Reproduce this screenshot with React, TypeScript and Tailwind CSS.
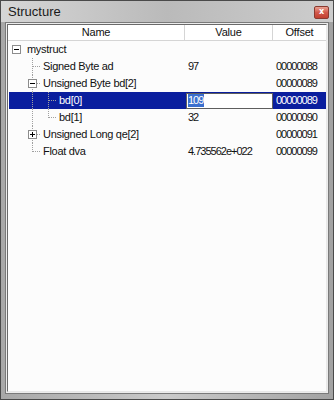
import React from "react";

type Line = "none" | "pipe" | "tee" | "ell";

function IndentCell({ kind, box }: { kind: Line; box?: "minus" | "plus" }) {
  return (
    <div className="w-[16px] h-[17px] shrink-0">
      <svg width="16" height="17" viewBox="0 0 16 17" shapeRendering="crispEdges">
        {kind === "pipe" && (
          <line x1="7.5" y1="0" x2="7.5" y2="17" stroke="#a0a0a0" strokeDasharray="1 1" />
        )}
        {kind === "tee" && (
          <>
            <line x1="7.5" y1="0" x2="7.5" y2="17" stroke="#a0a0a0" strokeDasharray="1 1" />
            <line x1="8" y1="8.5" x2="16" y2="8.5" stroke="#a0a0a0" strokeDasharray="1 1" />
          </>
        )}
        {kind === "ell" && (
          <>
            <line x1="7.5" y1="0" x2="7.5" y2="9" stroke="#a0a0a0" strokeDasharray="1 1" />
            <line x1="8" y1="8.5" x2="16" y2="8.5" stroke="#a0a0a0" strokeDasharray="1 1" />
          </>
        )}
        {box && (
          <>
            <rect x="3.5" y="4.5" width="8" height="8" fill="#ffffff" stroke="#8c8c8c" />
            <line x1="5" y1="8.5" x2="10" y2="8.5" stroke="#000000" />
            {box === "plus" && <line x1="7.5" y1="6" x2="7.5" y2="11" stroke="#000000" />}
          </>
        )}
      </svg>
    </div>
  );
}

type Row = {
  cells: { kind: Line; box?: "minus" | "plus" }[];
  name: string;
  value: string;
  offset: string;
  selected?: boolean;
  edit?: boolean;
};

const rows: Row[] = [
  { cells: [{ kind: "none", box: "minus" }], name: "mystruct", value: "", offset: "" },
  { cells: [{ kind: "none" }, { kind: "tee" }], name: "Signed Byte ad", value: "97", offset: "00000088" },
  { cells: [{ kind: "none" }, { kind: "tee", box: "minus" }], name: "Unsigned Byte bd[2]", value: "", offset: "00000089" },
  { cells: [{ kind: "none" }, { kind: "pipe" }, { kind: "tee" }], name: "bd[0]", value: "109", offset: "00000089", selected: true, edit: true },
  { cells: [{ kind: "none" }, { kind: "pipe" }, { kind: "ell" }], name: "bd[1]", value: "32", offset: "00000090" },
  { cells: [{ kind: "none" }, { kind: "tee", box: "plus" }], name: "Unsigned Long qe[2]", value: "", offset: "00000091" },
  { cells: [{ kind: "none" }, { kind: "ell" }], name: "Float dva", value: "4.735562e+022", offset: "00000099" },
];

export default function App() {
  return (
    <div
      className="w-[334px] h-[400px] flex flex-col border border-[#4a4a4a] bg-gradient-to-r from-[#a8a8a8] via-[#cacaca] to-[#a2a2a2] text-[11px] text-[#111111] select-none"
      style={{ fontFamily: '"Liberation Sans", Arial, sans-serif' }}
    >
      {/* Title bar */}
      <div className="h-[21px] shrink-0 flex items-center justify-between pl-[7px] pr-[4px] bg-gradient-to-r from-[#d6d6d6] via-[#bababa] to-[#cdcdcd]">
        <span className="text-[13px] text-[#1a1a1a] mt-[1px]">Structure</span>
        <div className="w-[15px] h-[13px] mt-[1px] rounded-[2px] border border-[#8a3a30] bg-gradient-to-b from-[#e9a192] via-[#d2584a] to-[#c2402f] flex items-center justify-center">
          <span className="text-[8px] leading-none font-bold text-white" style={{ fontFamily: '"DejaVu Sans", sans-serif' }}>x</span>
        </div>
      </div>
      {/* Body frame */}
      <div className="flex-1 flex px-[4px] pb-[5px]">
        <div className="flex-1 flex border border-[#7a7a7a]">
          <div className="flex-1 flex border border-[#ececec]">
            <div className="flex-1 flex border-t border-l border-[#6a6a6a] border-r border-b border-r-[#e8e8e8] border-b-[#e8e8e8]">
              <div className="flex-1 flex flex-col bg-[#fcfcfc]">
                {/* Header */}
                <div className="h-[16px] shrink-0 flex border-b border-[#d5d5d5] bg-white tracking-[-0.2px]">
                  <div className="w-[177px] flex items-center justify-center border-r border-[#d5d5d5]">Name</div>
                  <div className="w-[88px] flex items-center justify-center border-r border-[#d5d5d5]">Value</div>
                  <div className="flex-1 flex items-center justify-center">Offset</div>
                </div>
                {/* Rows */}
                <div className="flex flex-col">
                  {rows.map((r, i) => (
                    <div
                      key={i}
                      className={
                        "h-[17px] flex ml-[1px] " +
                        (r.selected ? "bg-[#0a1e9e] text-white" : "")
                      }
                    >
                      <div className="w-[176px] flex items-center shrink-0">
                        <div className="flex">
                          {r.cells.map((c, j) => (
                            <IndentCell key={j} kind={c.kind} box={c.box} />
                          ))}
                        </div>
                        <span className="ml-[2px] whitespace-nowrap tracking-[-0.3px]">{r.name}</span>
                      </div>
                      <div className="w-[88px] shrink-0 flex items-center tracking-[-1px]">
                        {r.edit ? (
                          <div className="w-[87px] h-[16px] ml-[1px] bg-white border border-[#5e5e5e] flex items-center">
                            <span className="bg-[#3b6fce] text-white leading-[13px] pr-[1px] ml-[1px]">{r.value}</span>
                          </div>
                        ) : (
                          <span className="ml-[3px]">{r.value}</span>
                        )}
                      </div>
                      <div className="flex-1 flex items-center pl-[3px] tracking-[-1px]">{r.offset}</div>
                    </div>
                  ))}
                </div>
              </div>
            </div>
          </div>
        </div>
      </div>
    </div>
  );
}
